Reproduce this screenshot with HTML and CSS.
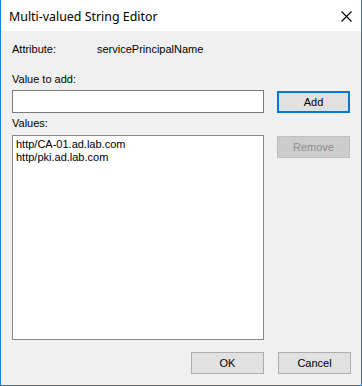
FILE: index.html
```html
<!DOCTYPE html>
<html lang="en">
<head>
  <meta charset="UTF-8" />
  <meta name="viewport" content="width=device-width, initial-scale=1.0"/>
  <title>Multi-valued String Editor</title>
  <link rel="stylesheet" href="styles.css">
</head>
<body>
  <div class="dialog">
    <div class="titlebar">
      <span class="title">Multi-valued String Editor</span>
      <svg class="close" width="11" height="11" viewBox="0 0 11 11">
        <path d="M0.5 0.5 L10.5 10.5 M10.5 0.5 L0.5 10.5" stroke="#000" stroke-width="1.1" fill="none"/>
      </svg>
    </div>

    <div class="content">
      <div class="attr-row">
        <span class="attr-label">Attribute:</span>
        <span class="attr-value">servicePrincipalName</span>
      </div>

      <div class="field-label add-label">Value to add:</div>
      <div class="row">
        <input type="text" class="value-input" />
        <button class="btn btn-focus add-btn">Add</button>
      </div>

      <div class="field-label values-label">Values:</div>
      <div class="row">
        <div class="listbox">
          <div class="list-item">http/CA-01.ad.lab.com</div>
          <div class="list-item">http/pki.ad.lab.com</div>
        </div>
        <button class="btn remove-btn" disabled>Remove</button>
      </div>

      <div class="footer">
        <button class="btn">OK</button>
        <button class="btn">Cancel</button>
      </div>
    </div>
  </div>
</body>
</html>
```

FILE: styles.css
```css
body {
  margin: 0;
  font-family: "Liberation Sans", Arial, sans-serif;
  font-size: 11px;
  color: #000;
}

.dialog {
  width: 362px;
  height: 386px;
  box-sizing: border-box;
  border: 1px solid #1883d7;
  border-top: none;
  background: #f0f0f0;
  display: flex;
  flex-direction: column;
}

.titlebar {
  height: 31px;
  background: #fff;
  display: flex;
  align-items: center;
  justify-content: space-between;
}

.title {
  font-family: "Noto Sans", "Open Sans", sans-serif;
  font-size: 12.4px;
  padding-left: 8px;
  padding-top: 1px;
}

.close {
  margin-right: 9px;
  margin-top: 1px;
}

.content {
  padding: 12px 10px 0 11px;
  line-height: 13px;
}

.attr-row {
  display: flex;
  height: 13px;
}

.attr-label {
  width: 85px;
}

.field-label {
  height: 13px;
}

.add-label {
  margin-top: 17px;
}

.values-label {
  margin-top: 4px;
}

.row {
  display: flex;
  gap: 13px;
  align-items: flex-start;
}

.add-label + .row {
  margin-top: 4px;
}

.values-label + .row {
  margin-top: 5px;
}

.value-input {
  width: 252px;
  height: 23px;
  box-sizing: border-box;
  border: 1px solid #7a7a7a;
  background: #fff;
  margin: 0;
  padding: 0 3px;
  font: inherit;
  outline: none;
}

.listbox {
  width: 252px;
  height: 205px;
  box-sizing: border-box;
  border: 1px solid #828790;
  background: #fff;
  padding: 2px 3px;
}

.list-item {
  height: 13px;
  white-space: nowrap;
}

.btn {
  width: 73px;
  height: 22px;
  box-sizing: border-box;
  border: 1px solid #adadad;
  background: #e1e1e1;
  font-family: "Liberation Sans", Arial, sans-serif;
  font-size: 11px;
  color: #000;
  padding: 0;
  margin: 0;
}

.btn-focus {
  border: 2px solid #0078d7;
}

.add-btn,
.remove-btn {
  margin-top: 1px;
}

.remove-btn {
  background: #cccccc;
  border-color: #bfbfbf;
  color: #8f8f8f;
}

.footer {
  display: flex;
  justify-content: flex-end;
  gap: 14px;
  margin-top: 12px;
}
```
